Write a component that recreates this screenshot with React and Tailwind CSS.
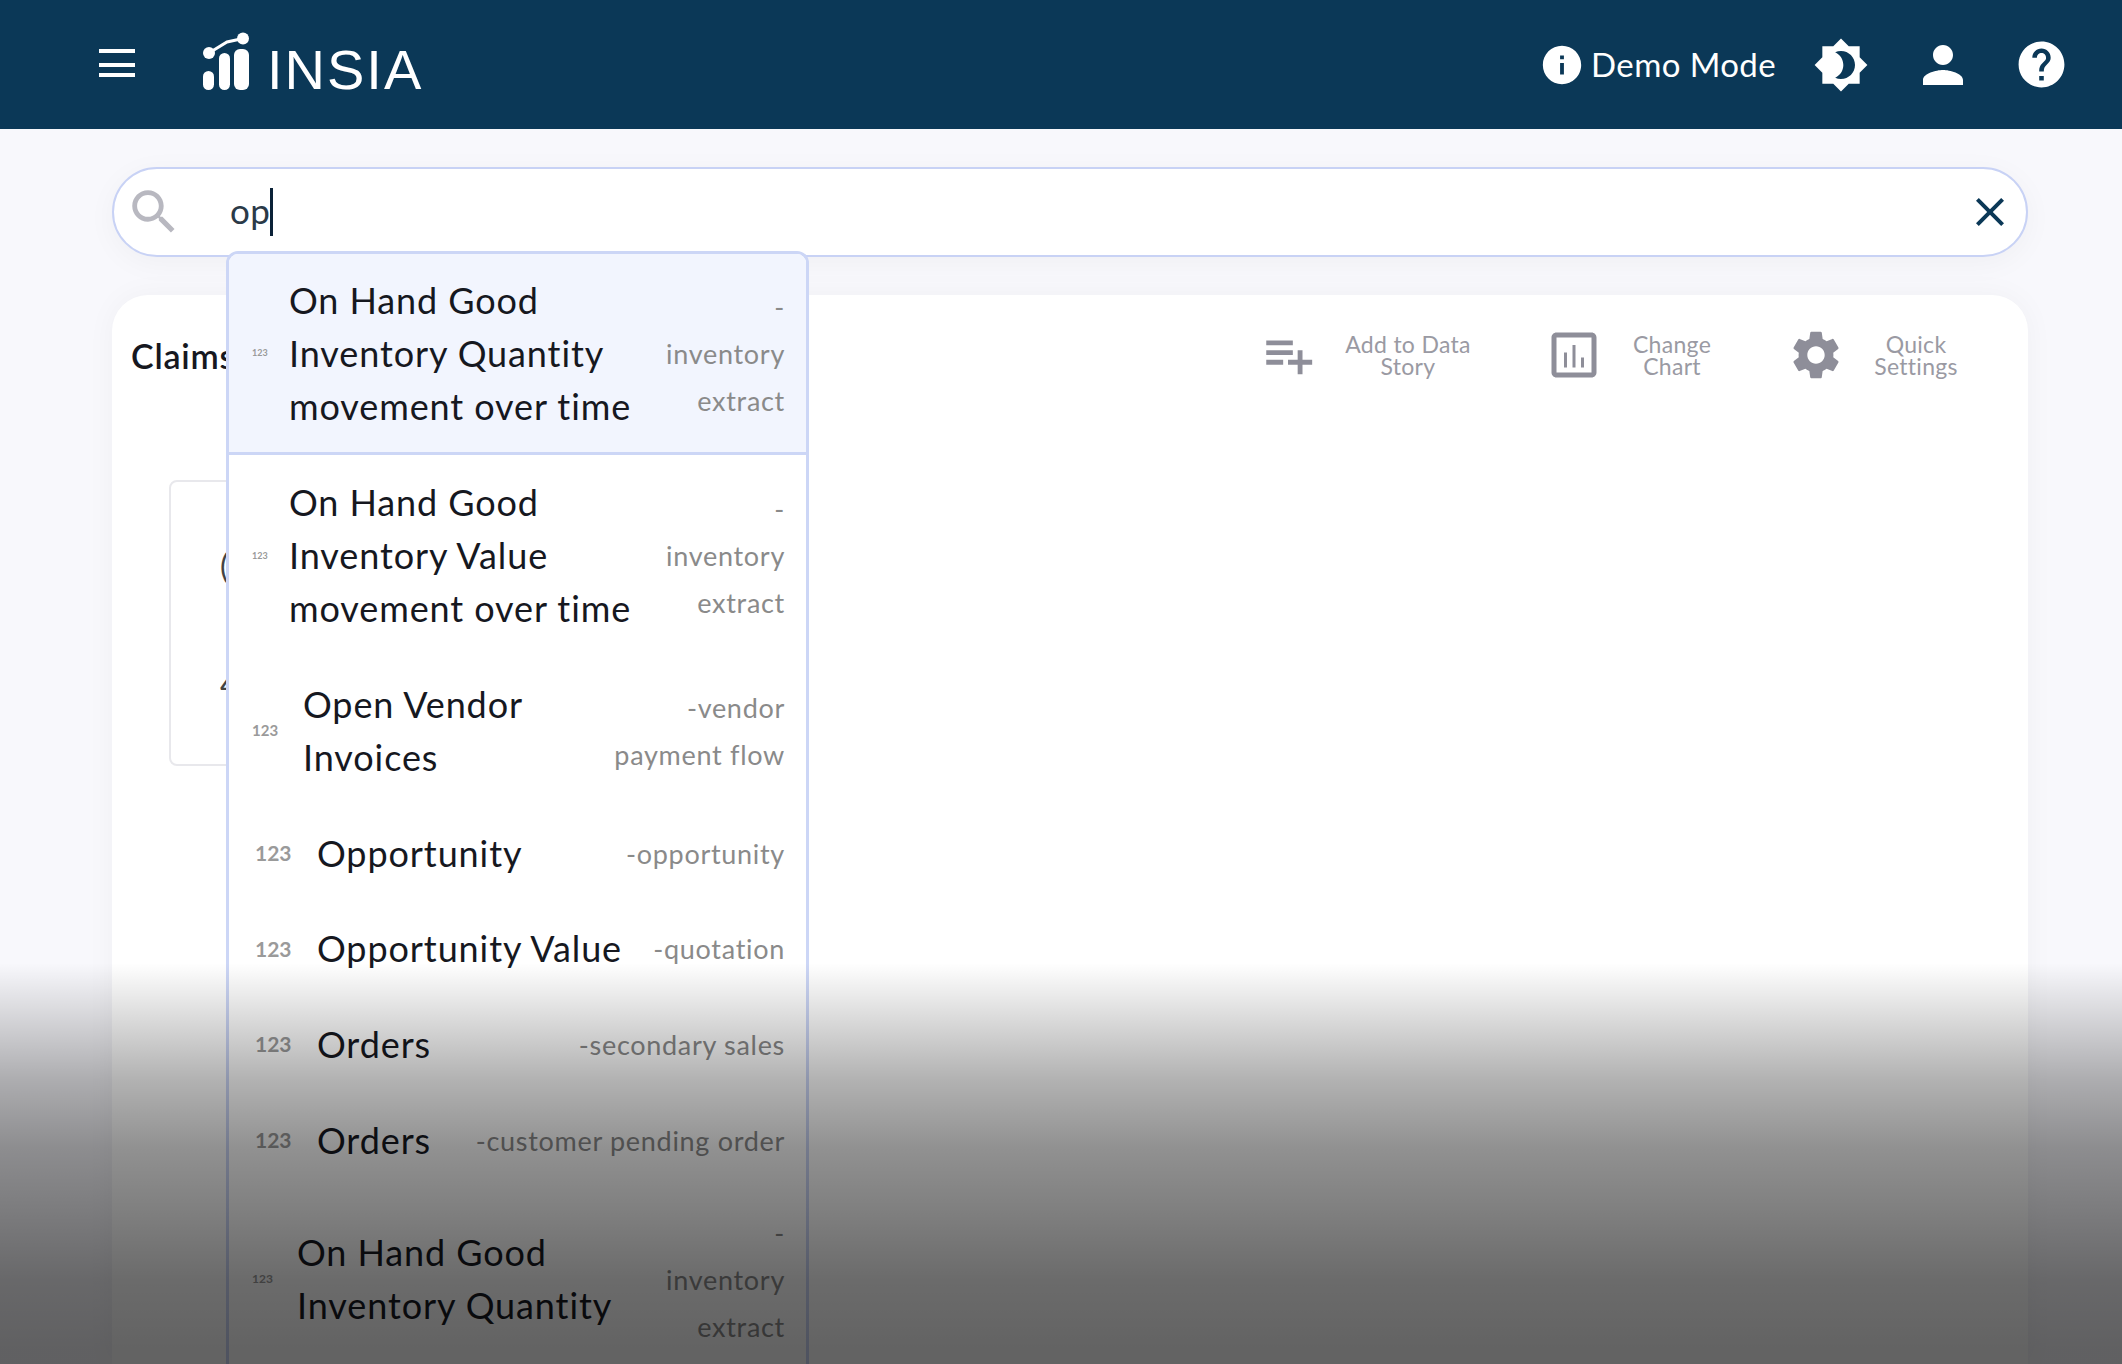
// App.jsx — INSIA search screen with suggestion dropdown open
import React from 'react';

const ICONS = {
  menu: 'M3 18h18v-2H3zm0-5h18v-2H3zm0-7h18V4H3z',
  info: 'M12 2C6.48 2 2 6.48 2 12s4.48 10 10 10 10-4.48 10-10S17.52 2 12 2zm1 15h-2v-6h2v6zm0-8h-2V7h2v2z',
  brightness: 'M20 8.69V4h-4.69L12 .69 8.69 4H4v4.69L.69 12 4 15.31V20h4.69L12 23.31 15.31 20H20v-4.69L23.31 12 20 8.69zM12 18c-.89 0-1.74-.2-2.5-.55C11.56 16.5 13 14.42 13 12s-1.44-4.5-3.5-5.45C10.26 6.2 11.11 6 12 6c3.31 0 6 2.69 6 6s-2.69 6-6 6z',
  person: 'M12 12c2.21 0 4-1.79 4-4s-1.79-4-4-4-4 1.79-4 4 1.79 4 4 4zm0 2c-2.67 0-8 1.34-8 4v2h16v-2c0-2.66-5.33-4-8-4z',
  help: 'M12 2C6.48 2 2 6.48 2 12s4.48 10 10 10 10-4.48 10-10S17.52 2 12 2zm1 17h-2v-2h2v2zm2.07-7.75l-.9.92C13.45 12.9 13 13.5 13 15h-2v-.5c0-1.1.45-2.1 1.17-2.83l1.24-1.26c.37-.36.59-.86.59-1.41 0-1.1-.9-2-2-2s-2 .9-2 2H8c0-2.21 1.79-4 4-4s4 1.79 4 4c0 .88-.36 1.68-.93 2.25z',
  search: 'M15.5 14h-.79l-.28-.27C15.41 12.59 16 11.11 16 9.5 16 5.91 13.09 3 9.5 3S3 5.91 3 9.5 5.91 16 9.5 16c1.61 0 3.09-.59 4.23-1.57l.27.28v.79l5 4.99L20.49 19l-4.99-5zm-6 0C7.01 14 5 11.99 5 9.5S7.01 5 9.5 5 14 7.01 14 9.5 11.99 14 9.5 14z',
  close: 'M19 6.41 17.59 5 12 10.59 6.41 5 5 6.41 10.59 12 5 17.59 6.41 19 12 13.41 17.59 19 19 17.59 13.41 12z',
  playlist: 'M14 10H3v2h11v-2zm0-4H3v2h11V6zm4 8v-4h-2v4h-4v2h4v4h2v-4h4v-2h-4zM3 16h7v-2H3v2z',
  chart: 'M19 3H5c-1.1 0-2 .9-2 2v14c0 1.1.9 2 2 2h14c1.1 0 2-.9 2-2V5c0-1.1-.9-2-2-2zm0 16H5V5h14v14zM8 11h1.2v6H8zM11.4 8h1.2v9h-1.2zM14.8 13H16v4h-1.2z',
  settings: 'M19.14 12.94c.04-.3.06-.61.06-.94 0-.32-.02-.64-.07-.94l2.03-1.58c.18-.14.23-.41.12-.61l-1.92-3.32c-.12-.22-.37-.29-.59-.22l-2.39.96c-.5-.38-1.03-.7-1.62-.94l-.36-2.54c-.04-.24-.24-.41-.48-.41h-3.84c-.24 0-.43.17-.47.41l-.36 2.54c-.59.24-1.13.57-1.62.94l-2.39-.96c-.22-.08-.47 0-.59.22L2.74 8.87c-.12.21-.08.47.12.61l2.03 1.58c-.05.3-.09.63-.09.94s.02.64.07.94l-2.03 1.58c-.18.14-.23.41-.12.61l1.92 3.32c.12.22.37.29.59.22l2.39-.96c.5.38 1.03.7 1.62.94l.36 2.54c.05.24.24.41.48.41h3.84c.24 0 .44-.17.47-.41l.36-2.54c.59-.24 1.13-.56 1.62-.94l2.39.96c.22.08.47 0 .59-.22l1.92-3.32c.12-.22.07-.47-.12-.61l-2.01-1.58zM12 15.6c-1.98 0-3.6-1.62-3.6-3.6s1.62-3.6 3.6-3.6 3.6 1.62 3.6 3.6-1.62 3.6-3.6 3.6z',
};

function Icon({ name, className }) {
  return (
    <svg viewBox="0 0 24 24" fill="currentColor" className={className}>
      <path d={ICONS[name]} fillRule="evenodd" />
    </svg>
  );
}

function Logo() {
  return (
    <svg viewBox="0 0 50 60" className="w-[50px] h-[60px]" fill="white">
      <rect x="0" y="39" width="11" height="19" rx="5.5" />
      <rect x="16" y="21" width="11" height="37" rx="5.5" />
      <rect x="31" y="17" width="15" height="41" rx="6" />
      <circle cx="6" cy="21" r="6" />
      <circle cx="40" cy="6.5" r="6" />
      <path d="M6 21 L24 10 L40 6.5" stroke="white" strokeWidth="3" fill="none" />
    </svg>
  );
}

const SUGERENCIAS = [
  {
    lineas: ['On Hand Good', 'Inventory Quantity', 'movement over time'],
    sub: ['-', 'inventory', 'extract'],
    num: 'w-[16px] text-[9px] mr-[21px]',
    fila: 'h-[201px] bg-[#f2f5fe] border-b-[3px] border-[#ccd6f6]',
  },
  {
    lineas: ['On Hand Good', 'Inventory Value', 'movement over time'],
    sub: ['-', 'inventory', 'extract'],
    num: 'w-[16px] text-[9px] mr-[21px]',
    fila: 'h-[201px]',
  },
  {
    lineas: ['Open Vendor', 'Invoices'],
    sub: ['-vendor', 'payment flow'],
    num: 'w-[27px] text-[15px] mr-[24px]',
    fila: 'h-[149px]',
  },
  { lineas: ['Opportunity'], sub: ['-opportunity'], num: 'w-[38px] text-[21px] ml-[3px] mr-[24px]', fila: 'h-[96px]' },
  { lineas: ['Opportunity Value'], sub: ['-quotation'], num: 'w-[38px] text-[21px] ml-[3px] mr-[24px]', fila: 'h-[95px]' },
  { lineas: ['Orders'], sub: ['-secondary sales'], num: 'w-[38px] text-[21px] ml-[3px] mr-[24px]', fila: 'h-[96px]' },
  { lineas: ['Orders'], sub: ['-customer pending order'], num: 'w-[38px] text-[21px] ml-[3px] mr-[24px]', fila: 'h-[96px]' },
  {
    lineas: ['On Hand Good', 'Inventory Quantity'],
    sub: ['-', 'inventory', 'extract'],
    num: 'w-[22px] text-[12px] mr-[23px]',
    fila: 'h-[182px]',
  },
];

function Sugerencia({ item }) {
  return (
    <div className={`flex items-center pl-[23px] pr-[21px] shrink-0 ${item.fila}`}>
      <span className={`shrink-0 font-bold text-[#9a9a9a] ${item.num}`}>123</span>
      <div className="text-[36px] leading-[53px] tracking-[0.9px] text-[#16181f] whitespace-nowrap">
        {item.lineas.map((l, i) => <div key={i}>{l}</div>)}
      </div>
      <div className="ml-auto text-[27px] leading-[47px] tracking-[0.7px] text-[#8a8a8a] text-right whitespace-nowrap">
        {item.sub.map((l, i) => <div key={i}>{l}</div>)}
      </div>
    </div>
  );
}

function Accion({ icon, iconClass, texto, textClass }) {
  return (
    <div className="flex items-center">
      <Icon name={icon} className={`text-[#8e8e99] ${iconClass}`} />
      <div className={`text-[23px] leading-[22px] tracking-[0.3px] text-[#9a9aa3] text-center ${textClass}`}>
        {texto}
      </div>
    </div>
  );
}

export default function App() {
  return (
    <div className="relative h-screen overflow-hidden bg-[#f8f8fc] font-['Lato',sans-serif]">

      {/* header */}
      <div className="h-[129px] bg-[#0b3857] flex items-center text-white">
        <Icon name="menu" className="w-[48px] h-[48px] ml-[93px]" />
        <div className="ml-[62px] mr-[14px] mt-[-6px]"><Logo /></div>
        <span className="font-['Liberation_Sans',sans-serif] text-[56px] leading-none tracking-[2px] mt-[10px]">INSIA</span>

        <Icon name="info" className="w-[46px] h-[46px] ml-auto" />
        <span className="text-[33px] tracking-[0.4px] ml-[6px] mr-[37px]">Demo Mode</span>
        <Icon name="brightness" className="w-[56px] h-[56px]" />
        <Icon name="person" className="w-[60px] h-[60px] ml-[44px]" />
        <Icon name="help" className="w-[55px] h-[55px] ml-[41px] mr-[53px]" />
      </div>

      <div className="pl-[112px] pr-[94px] pt-[38px] flex flex-col h-[1235px]">

        {/* buscador */}
        <div className="relative z-10 h-[90px] shrink-0 bg-white border-2 border-[#c8d2f5] rounded-[45px] flex items-center shadow-[0_6px_30px_rgba(0,0,0,0.04)]">
          <Icon name="search" className="w-[58px] h-[58px] ml-[11px] text-[#b8b8c0]" />
          <span className="ml-[47px] mt-[-3px] text-[35px] tracking-[0.4px] text-[#2b3a48]">op</span>
          <span className="w-[3px] h-[48px] bg-[#0b2238]" />
          <Icon name="close" className="w-[48px] h-[48px] ml-auto mr-[12px] text-[#0b3857]" />

          {/* lista de sugerencias */}
          <div className="absolute left-[112px] top-[82px] w-[583px] h-[1113px] bg-white border-[3px] border-b-0 border-[#ccd6f6] rounded-t-[12px] overflow-hidden flex flex-col">
            {SUGERENCIAS.map((item, i) => <Sugerencia key={i} item={item} />)}
          </div>
        </div>

        {/* tarjeta */}
        <div className="mt-[38px] flex-1 bg-white rounded-t-[36px] shadow-[0_0_30px_rgba(0,0,0,0.04)]">
          <div className="flex items-center h-[120px] pl-[19px] pr-[62px]">
            <span className="text-[34px] font-semibold tracking-[0.8px] text-[#16181f]">Claims</span>
            <div className="ml-auto flex items-center">
              <Accion icon="playlist" iconClass="w-[58px] h-[58px]" texto="Add to Data Story" textClass="w-[140px] ml-[21px]" />
              <div className="ml-[66px]">
                <Accion icon="chart" iconClass="w-[60px] h-[60px]" texto="Change Chart" textClass="w-[100px] ml-[18px]" />
              </div>
              <div className="ml-[65px]">
                <Accion icon="settings" iconClass="w-[58px] h-[58px]" texto="Quick Settings" textClass="w-[100px] ml-[21px]" />
              </div>
            </div>
          </div>
          <div className="ml-[57px] mt-[65px] w-[560px] h-[286px] border-2 border-[#e8e8ec] rounded-[8px] text-[32px] text-[#444] pl-[49px] pt-[60px]">
            <div>(</div>
            <div className="mt-[70px]">4</div>
          </div>
        </div>
      </div>

      {/* degradado inferior */}
      <div className="absolute left-0 right-0 bottom-0 h-[401px] z-20 pointer-events-none bg-[linear-gradient(to_bottom,rgba(0,0,0,0)_0%,rgba(0,0,0,0.13)_12.5%,rgba(0,0,0,0.3)_29%,rgba(0,0,0,0.43)_46%,rgba(0,0,0,0.5)_62%,rgba(0,0,0,0.58)_79%,rgba(0,0,0,0.61)_96%,rgba(0,0,0,0.61)_100%)]" />
    </div>
  );
}
